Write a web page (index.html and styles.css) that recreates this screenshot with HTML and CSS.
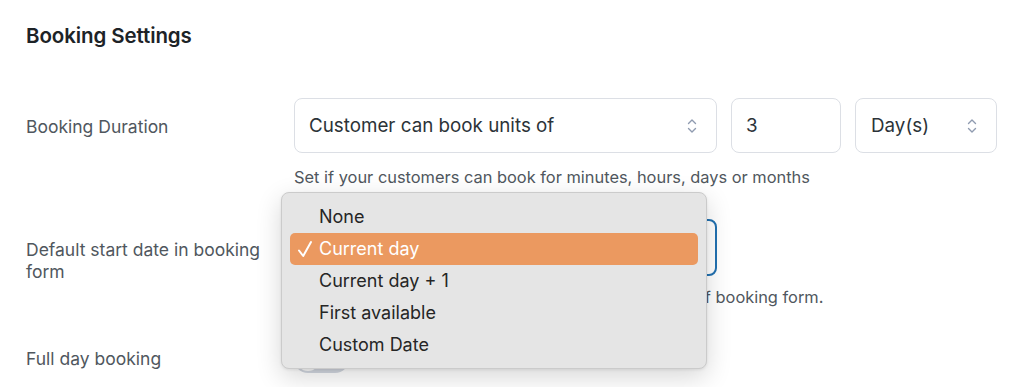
FILE: index.html
```html
<!DOCTYPE html>
<html lang="en">
<head>
    <meta charset="UTF-8">
    <title>Booking Settings</title>
    <link rel="stylesheet" href="styles.css">
</head>
<body>
    <div class="settings">
        <h2 class="settings-title">Booking Settings</h2>

        <div class="row">
            <div class="row-label">Booking Duration</div>
            <div class="row-field">
                <div class="controls">
                    <div class="select select-wide">
                        <span>Customer can book units of</span>
                        <svg class="arrows" width="10" height="16" viewBox="0 0 10 16"><path d="M1.5 5.5 5 2l3.5 3.5M1.5 10.5 5 14l3.5-3.5" fill="none" stroke="#8f9bb0" stroke-width="1.4" stroke-linecap="round" stroke-linejoin="round"/></svg>
                    </div>
                    <div class="select input-num"><span>3</span></div>
                    <div class="select select-unit">
                        <span>Day(s)</span>
                        <svg class="arrows" width="10" height="16" viewBox="0 0 10 16"><path d="M1.5 5.5 5 2l3.5 3.5M1.5 10.5 5 14l3.5-3.5" fill="none" stroke="#8f9bb0" stroke-width="1.4" stroke-linecap="round" stroke-linejoin="round"/></svg>
                    </div>
                </div>
                <p class="help">Set if your customers can book for minutes, hours, days or months</p>
            </div>
        </div>

        <div class="row row-start">
            <div class="row-label">Default start date in booking form</div>
            <div class="row-field">
                <div class="controls">
                    <!-- value hidden behind the open menu -->
                    <div class="select select-wide focused"></div>
                </div>
                <p class="help help-tight">Choose a date to be selected by default at the start of booking form.</p>

                <!-- open dropdown -->
                <ul class="menu">
                    <li>None</li>
                    <li class="selected">
                        <svg class="check" width="16" height="18" viewBox="0 0 16 18"><path d="M2 10.5 6.2 16 14 2" fill="none" stroke="#fff" stroke-width="2" stroke-linecap="round" stroke-linejoin="round"/></svg>
                        Current day
                    </li>
                    <li>Current day + 1</li>
                    <li>First available</li>
                    <li>Custom Date</li>
                </ul>
            </div>
        </div>

        <div class="row row-last">
            <div class="row-label">Full day booking</div>
            <div class="row-field">
                <div class="toggle"><span class="knob"></span></div>
            </div>
        </div>
    </div>
</body>
</html>
```

FILE: styles.css
```css
/* base */
body { margin: 0; background: #fff; font-family: Inter, "Noto Sans", Arial, sans-serif; color: #2c3338; overflow: hidden; }
.settings { padding: 23px 26px 0; }
.settings-title { margin: 0 0 49px; font-size: 20.5px; font-weight: 600; color: #1d2327; line-height: 26px; letter-spacing: -0.1px; }

/* rows */
.row { display: flex; align-items: flex-start; margin-bottom: 31px; }
.row-label { width: 244px; margin-right: 24px; padding-top: 18px; font-size: 17.5px; line-height: 22px; color: #50575e; }
.row-field { position: relative; flex-grow: 1; }
.controls { display: flex; gap: 14px; }
.row-start .row-label { padding-top: 20px; }
.row-last .row-label { padding-top: 9px; }

/* select / input boxes */
.select { display: flex; align-items: center; justify-content: space-between; height: 55px; box-sizing: border-box; border: 1px solid #dcdfe5; border-radius: 8px; padding: 0 19px 0 14px; font-size: 18.8px; color: #2c3338; background: #fff; }
.select-wide { width: 423px; }
.input-num { width: 110px; }
.select-unit { width: 142px; padding-left: 15px; }
.select.focused { height: 57px; border: 2px solid #2271b1; }
.arrows { display: block; }

.help { margin: 13px 0 0; font-size: 16.4px; line-height: 22px; color: #50575e; }
.help-tight { margin-top: 10px; }

/* dropdown */
.menu { position: absolute; left: -13px; top: -27px; width: 426px; height: 177px; box-sizing: border-box; margin: 0; padding: 8px 8px; list-style: none; background: #e5e5e5; border: 1px solid #cbcbcb; border-radius: 8px; box-shadow: 0 8px 26px rgba(0,0,0,0.16), 0 1px 3px rgba(0,0,0,0.08); z-index: 10; }
.menu li { position: relative; height: 32px; line-height: 32px; padding-left: 29px; border-radius: 5px; font-size: 18px; color: #262626; }
.menu li.selected { background: #eb9960; color: #fff; }
.check { position: absolute; left: 7px; top: 7px; }

/* toggle */
.toggle { width: 55px; height: 28px; margin-top: 6px; border-radius: 14px; background: #d2d7e0; position: relative; }
.knob { position: absolute; left: 2px; top: 2px; width: 24px; height: 24px; border-radius: 50%; background: #fff; }
```
